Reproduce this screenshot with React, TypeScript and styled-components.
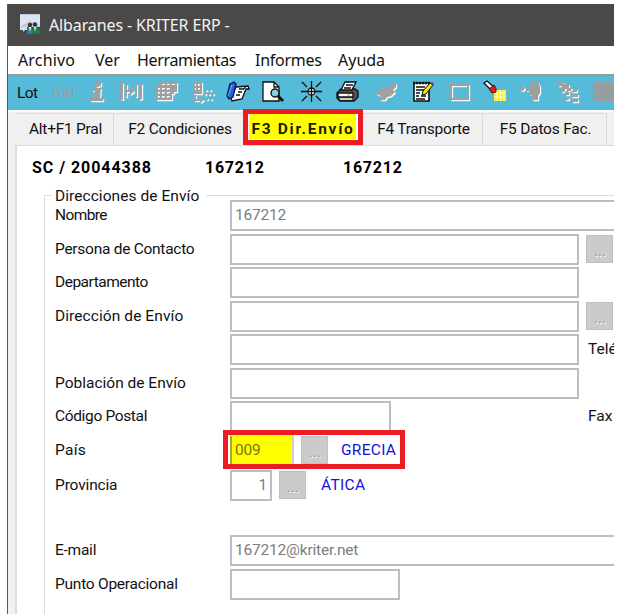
import React from 'react';
import styled, { createGlobalStyle, css } from 'styled-components';

const GlobalStyle = createGlobalStyle`
  * { box-sizing: border-box; }
  body { margin: 0; background: #fff; overflow: hidden; }
`;

const Screen = styled.div`
  width: 618px;
  height: 614px;
  padding: 4px 4px 0 7px;
  background: #fff;
  font-family: Roboto, 'Liberation Sans', sans-serif;
  font-size: 15.5px;
  color: #111;
`;

const Window = styled.div`
  height: 610px;
  display: flex;
  flex-direction: column;
  border-left: 1px solid #5b5959;
  background: #f0f0f0;
  overflow: hidden;
`;

const TitleBar = styled.header`
  height: 42px;
  flex: none;
  display: flex;
  align-items: center;
  gap: 8px;
  padding-left: 11px;
  background: #4b4948;
  color: #f4f4f4;
  font: 16px 'Noto Sans', 'Open Sans', sans-serif;
`;

const MenuBar = styled.nav`
  height: 28px;
  flex: none;
  display: flex;
  align-items: center;
  background: #fff;
  font: 16px 'Noto Sans', 'Open Sans', sans-serif;
  padding-left: 10px;
`;

const Label = styled.span<{ $ls?: number; $w?: number }>`
  flex: none;
  white-space: nowrap;
  letter-spacing: ${(p) => p.$ls ?? 0}px;
  ${(p) => p.$w && css`width: ${p.$w}px;`}
`;

const ToolBar = styled.div`
  height: 36px;
  flex: none;
  display: flex;
  align-items: center;
  padding-left: 9px;
  border-top: 2px solid #9b9b9b;
  background: #55bbd8;
`;

const Tool = styled.span<{ $w: number }>`
  width: ${(p) => p.$w}px;
  flex: none;
  height: 24px;
  white-space: nowrap;
  line-height: 24px;
  svg { display: block; overflow: visible; }
`;

const Md = styled.span`
  font: 19px/20px 'Liberation Serif', serif;
  color: #9a9fa2;
  letter-spacing: -1px;
`;

const Tabs = styled.div`
  height: 35px;
  flex: none;
  display: flex;
  padding: 1px 0 0 8px;
  border-top: 2px solid #fbfbfb;
  background: #f0f0f0;
`;

const Tab = styled.div<{ $w: number; $active?: boolean }>`
  position: relative;
  width: ${(p) => p.$w}px;
  flex: none;
  display: flex;
  align-items: center;
  justify-content: center;
  border-top: 1px solid #dcdcdc;
  border-right: 1px solid #d9d9d9;
  padding: 0 0 1px 2px;
  ${(p) => p.$active && css`
    font-weight: 700;
    border-color: transparent;
    color: #1c1c00;
  `}
`;

const TabMark = styled.div`
  position: absolute;
  left: -2px;
  top: -5px;
  width: 120px;
  height: 36px;
  border: 5px solid #ed1c24;
  padding-top: 3px;
  background: linear-gradient(#ff0, #ff0) 1px 0 / 107px 25px no-repeat #fff;
  display: flex;
  align-items: center;
  justify-content: center;
  z-index: 1;
`;

const Page = styled.main`
  flex: 1;
  margin-left: 7px;
  border-left: 2px solid #dcdcdc;
  border-top: 1px solid #dcdcdc;
  background: #fff;
  overflow: hidden;
`;

const Heading = styled.div`
  height: 49px;
  display: flex;
  padding: 11px 0 0 15px;
  font-weight: 700;
  font-size: 16px;
  line-height: 21px;
  color: #000;
`;

const Group = styled.section`
  margin-left: 27px;
  height: 430px;
  border-top: 1px solid #dcdcdc;
  border-left: 1px solid #dcdcdc;
`;

const Legend = styled.h2`
  width: 154px;
  height: 20px;
  margin: -10px 0 -6px 7px;
  padding-left: 3px;
  background: #fff;
  font-size: 15.5px;
  font-weight: 400;
  line-height: 20px;
`;

const Row = styled.div<{ $h: number }>`
  height: ${(p) => p.$h}px;
  display: flex;
  align-items: flex-start;
  padding-left: 10px;
  line-height: 30px;
`;

const RowLabel = styled.label<{ $ls?: number }>`
  width: 175px;
  flex: none;
  white-space: nowrap;
  letter-spacing: ${(p) => p.$ls ?? 0}px;
`;

const Field = styled.div<{ $w: number; $right?: boolean; $mark?: boolean }>`
  width: ${(p) => p.$w}px;
  height: 31px;
  flex: none;
  padding: 0 3px;
  border: 2px solid #bdbdc4;
  line-height: 27px;
  letter-spacing: -0.2px;
  color: #7c7c7c;
  text-align: ${(p) => (p.$right ? 'right' : 'left')};
  ${(p) => p.$mark && css`
    border-right-color: #cfcfd3;
    border-left-color: #a6a62e;
    border-top-color: #ff0;
    background: linear-gradient(#ff0, #ff0) 0 0 / 60px 29px no-repeat #fff;
    color: #77770c;
  `}
`;

const Lookup = styled.button`
  width: 27px;
  height: 28px;
  flex: none;
  margin: 1px 0 0 7px;
  padding: 3px 0 0 1px;
  border: 1px solid #bfbfbf;
  background: #cbcbcb;
  color: #999;
  text-shadow: 1px 1px 0 #fff;
  font: 15px/20px Roboto, sans-serif;
`;

const Value = styled.span<{ $ml: number }>`
  margin-left: ${(p) => p.$ml}px;
  letter-spacing: 0.3px;
  color: #1111dc;
`;

const Side = styled.span<{ $ml: number }>`
  margin-left: ${(p) => p.$ml}px;
  white-space: nowrap;
  flex: none;
`;

const CountryRow = styled(Row)`
  position: relative;
`;

const CountryMark = styled.div`
  position: absolute;
  left: 178px;
  top: -5px;
  width: 182px;
  height: 39px;
  border: 5px solid #ed1c24;
`;

const AppIcon = () => (
  <svg width="22" height="22" viewBox="0 0 22 22">
    <path d="M1 0h20v13H1z" fill="#dbe6f2" />
    <path d="M1 0h20v1H1zM2 12l9-5 10 5v1H2z" fill="#b8cbdc" />
    <path d="M1 13h7v3H6l-2 2v-2H1z" fill="#d9dfe6" />
    <circle cx="11" cy="11" r="2.2" fill="#4a2b1c" />
    <circle cx="16" cy="10.500" r="2.2" fill="#263645" />
    <path d="M8 20v-4l2-3h3l1 7z" fill="#247fa4" />
    <path d="M14 20l1-7h3l3 4v3z" fill="#16833b" />
    <path d="M10 13h2l-1 5zM15 13h2l-1 5z" fill="#fff" />
  </svg>
);

/* Disabled toolbar glyphs are grey with a white lower-right relief. */
const Relief = ({ d, w = 23 }: { d: string; w?: number }) => (
  <svg width={w} height="23" viewBox={`0 0 ${w} 23`}>
    <path d={d} fill="#f4fbfd" fillRule="evenodd" transform="translate(1.2 1.2)" />
    <path d={d} fill="#a0a0a0" fillRule="evenodd" />
  </svg>
);

const ICONS = {
  info: 'M6 0h3v1h2v4H9v1H6V5H5V1h1zM2 9l3-2h6l-1 10h3v3H0v-3h4l1-7H2z',
  codes: 'M0 3l3-2v18l-3-1zM5 3h2v13H5zM15 3h2v13h-2zM19 1l3 2v15l-3 1zM7 9h3V6l5 4-5 4v-3H7z',
  sheets: 'M4 1h18v10h-3v2h-2v6H1V4h3zM3 7v2h2V7zm4 0v2h3V7zm5 0v2h3V7zM3 11v2h2v-2zm4 0v2h3v-2zm5 0v2h3v-2zM3 15v2h2v-2zm4 0v2h3v-2zm5 0v2h3v-2zM7 3v1h3V3zm5 0v1h3V3zm5 0v1h3V3z',
  transfer: 'M1 1h9v12H1zM3 3v2h1V3zm3 0v2h2V3zM3 7v2h1V7zm3 0v2h2V7zM2 14h2v4h4v-2l4 3-4 3v-2H2zM12 12h2v2h-2zM16 12h2v2h-2zM20 12h2v2h-2zM13 8h2v2h-2zM17 8h2v2h-2zM14 17h2v2h-2zM18 17h2v2h-2z',
  plug: 'M9 6l4 1 3-4 5-1v4l-3 3 2 2-4 4-4 1-2 3H5l1-4-5-2v-3h4l1-3z',
  frame: 'M1 3h19v16H1zM3 5v12h15V5z',
  hand: 'M10 3l3-2h6l2 4v7l-2 3v4h-6v-4l-3-2v-3H7V8h3zM1 7l2-3 3 3-2 3-3-1z',
  tree: 'M1 1h6v2h5v4h4v3h-6V8H5V5H1zM4 8h4v3H4zM14 8h6v3h-6zM8 11h4v3H8zM14 13h7v3h-7zM8 16h4v3H8zM15 18h6v3h-6z',
};

const Book = () => (
  <svg width="24" height="23" viewBox="0 0 24 23" strokeWidth="1.3">
    <path d="M10 6l12-1 1 3h-3l-4 10-10 2-1-3z" fill="#fff" stroke="#111" />
    <path d="M13 8h5M12 11h4M10 14h4M20 5l-2 3" stroke="#111" />
    <path d="M4 3l4-2 2 2-3 13-4 2-2-3z" fill="#2364dd" stroke="#07144f" />
    <path d="M6 4l-4 11" stroke="#8ecaff" strokeWidth="0.8" />
  </svg>
);

const Preview = () => (
  <svg width="23" height="23" viewBox="0 0 23 23">
    <path d="M1 1h11l5 5v14H1z" fill="#fff" stroke="#111" strokeWidth="1.3" />
    <path d="M12 1v5h5" fill="none" stroke="#111" strokeWidth="1.3" />
    <circle cx="13" cy="12" r="4" fill="#83d3e5" stroke="#111" strokeWidth="1.4" />
    <path d="M16 15l5 5" stroke="#111" strokeWidth="3" />
  </svg>
);

const Target = () => (
  <svg width="23" height="23" viewBox="0 0 23 23" fill="none" stroke="#111" strokeWidth="1.3">
    <path d="M10.500 0v21M0 10.500h21M1 1l5 5M20 1l-5 5M1 20l5-5M20 20l-5-5" />
    <circle cx="10.500" cy="10.500" r="3.5" fill="#fff" />
    <path d="M10.500 7v7M7 10.500h7" />
  </svg>
);

const Printer = () => (
  <svg width="24" height="23" viewBox="0 0 24 23" stroke="#111" strokeWidth="1.4">
    <path d="M1 12l4-4h14l3 2v6l-4 4H4l-3-3z" fill="#555" />
    <path d="M5 9L9 1h11l-4 8z" fill="#fff" />
    <path d="M10 4h7M8 7h7" />
    <path d="M2 12h15v4H2z" fill="#fff" />
    <path d="M4 18h12" stroke="#fff" />
    <path d="M11 14h3" stroke="#d7c52c" />
  </svg>
);

const Notepad = () => (
  <svg width="23" height="23" viewBox="0 0 23 23">
    <path d="M2 2h15v18H2z" fill="#fff" stroke="#111" strokeWidth="1.6" />
    <path d="M1 2h18" stroke="#111" strokeWidth="2.6" strokeDasharray="2 1" />
    <path d="M4 6h9M4 9h8M4 12h4M10 12h4M4 15h3M9 15h5M4 18h9" stroke="#111" strokeWidth="1.4" />
    <path d="M10 14l1-4 7-8 3 2-7 9z" fill="#f2df19" stroke="#111" />
    <path d="M18 2l2-1 2 2-1 2z" fill="#8a2b91" />
  </svg>
);

const Torch = () => (
  <svg width="24" height="23" viewBox="0 0 24 23">
    <path d="M10 9h12v11H10z" fill="#ffef15" />
    <path d="M13 9v11M16.500 9v11M20 9v11M10 12h12M10 16h12" stroke="#fffbd0" />
    <path d="M0 2l3-2 7 6-3 3z" fill="#fff" stroke="#111" strokeWidth="1.3" />
    <path d="M5 8l5-4 2 3v4l-4 1z" fill="#dc1e18" stroke="#701010" />
  </svg>
);

const Clipped = () => (
  <svg width="21" height="23" viewBox="0 0 21 23">
    <path d="M0 1h21v19H0z" fill="#999da0" />
    <path d="M2 17h3v-2h4v2h3v-5h3v4h3V9h3" fill="none" stroke="#70a9b9" strokeDasharray="2 1" />
  </svg>
);

const App = () => (
  <Screen>
    <GlobalStyle />
    <Window>
      <TitleBar>
        <AppIcon />
        <Label $ls={-0.12}>Albaranes - KRITER ERP -</Label>
      </TitleBar>
      <MenuBar>
        <Label $w={77} $ls={0.15}>Archivo</Label>
        <Label $w={42}>Ver</Label>
        <Label $w={118} $ls={-0.33}>Herramientas</Label>
        <Label $w={83} $ls={-0.25}>Informes</Label>
        <Label>Ayuda</Label>
      </MenuBar>
      <ToolBar>
        <Tool $w={35}><Label $ls={-0.6}>Lot</Label></Tool>
        <Tool $w={38}><Md>md</Md></Tool>
        <Tool $w={30}><Relief d={ICONS.info} w={16} /></Tool>
        <Tool $w={35}><Relief d={ICONS.codes} /></Tool>
        <Tool $w={37}><Relief d={ICONS.sheets} /></Tool>
        <Tool $w={34}><Relief d={ICONS.transfer} /></Tool>
        <Tool $w={36}><Book /></Tool>
        <Tool $w={39}><Preview /></Tool>
        <Tool $w={35}><Target /></Tool>
        <Tool $w={39}><Printer /></Tool>
        <Tool $w={37}><Relief d={ICONS.plug} /></Tool>
        <Tool $w={37}><Notepad /></Tool>
        <Tool $w={35}><Relief d={ICONS.frame} /></Tool>
        <Tool $w={35}><Torch /></Tool>
        <Tool $w={38}><Relief d={ICONS.hand} /></Tool>
        <Tool $w={36}><Relief d={ICONS.tree} /></Tool>
        <Tool $w={20}><Clipped /></Tool>
      </ToolBar>
      <Tabs>
        <Tab $w={98}><Label $ls={-0.25}>Alt+F1 Pral</Label></Tab>
        <Tab $w={131}><Label $ls={-0.22}>F2 Condiciones</Label></Tab>
        <Tab $w={118} $active><TabMark><Label $ls={1.7}>F3 Dir.Envío</Label></TabMark></Tab>
        <Tab $w={120}><Label $ls={-0.25}>F4 Transporte</Label></Tab>
        <Tab $w={124}><Label $ls={-0.2}>F5 Datos Fac.</Label></Tab>
      </Tabs>
      <Page>
        <Heading>
          <Label $w={173} $ls={0.95}>SC / 20044388</Label>
          <Label $w={138} $ls={0.75}>167212</Label>
          <Label $ls={0.75}>167212</Label>
        </Heading>
        <Group>
          <Legend><Label $ls={0.06}>Direcciones de Envío</Label></Legend>
          <Row $h={34}><RowLabel $ls={-0.6}>Nombre</RowLabel><Field $w={400}>167212</Field></Row>
          <Row $h={33}><RowLabel $ls={-0.27}>Persona de Contacto</RowLabel><Field $w={349} /><Lookup>...</Lookup></Row>
          <Row $h={34}><RowLabel $ls={-0.5}>Departamento</RowLabel><Field $w={349} /></Row>
          <Row $h={33}><RowLabel $ls={0.08}>Dirección de Envío</RowLabel><Field $w={349} /><Lookup>...</Lookup></Row>
          <Row $h={34}><RowLabel /><Field $w={349} /><Side $ml={9}>Telé</Side></Row>
          <Row $h={33}><RowLabel>Población de Envío</RowLabel><Field $w={349} /></Row>
          <Row $h={34}><RowLabel $ls={-0.35}>Código Postal</RowLabel><Field $w={161} /><Side $ml={197}>Fax</Side></Row>
          <CountryRow $h={35}>
            <RowLabel $ls={0.3}>País</RowLabel><Field $w={64} $mark>009</Field><Lookup>...</Lookup><Value $ml={13}>GRECIA</Value>
            <CountryMark />
          </CountryRow>
          <Row $h={65}><RowLabel $ls={-0.15}>Provincia</RowLabel><Field $w={42} $right>1</Field><Lookup>...</Lookup><Value $ml={15}>ÁTICA</Value></Row>
          <Row $h={34}><RowLabel $ls={-0.25}>E-mail</RowLabel><Field $w={400}>167212@kriter.net</Field></Row>
          <Row $h={34}><RowLabel $ls={-0.25}>Punto Operacional</RowLabel><Field $w={170} /></Row>
        </Group>
      </Page>
    </Window>
  </Screen>
);

export default App;
